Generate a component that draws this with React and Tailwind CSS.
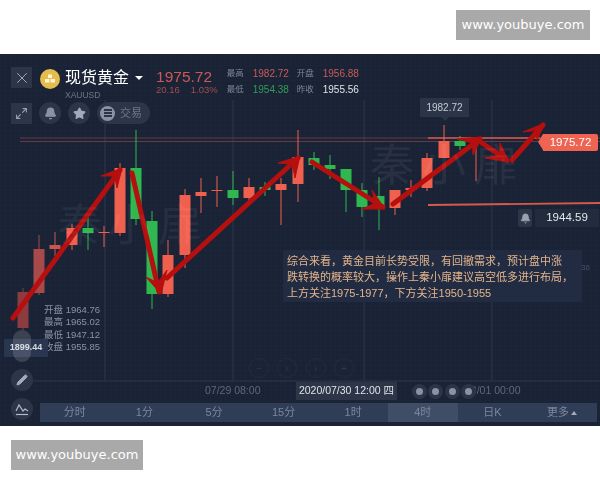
import React from 'react';
import { Bell, Star, X, Pencil, Maximize2 } from 'lucide-react';

const RED = '#f0604f';
const GREEN = '#2fb84f';

// x, bodyTop, bodyBottom, wickTop, wickBottom, colour
const candles = [
  [23, 292, 328, 288, 330, '#8c3c3e'],
  [39, 249, 293, 235, 295, '#a84a49'],
  [55, 245, 249, 232, 256, '#c9564c'],
  [72, 228, 245, 224, 250, RED],
  [88, 228, 233, 217, 250, GREEN],
  [104, 232, 233, 226, 247, RED],
  [120, 168, 233, 163, 236, RED],
  [136, 168, 219, 130, 225, GREEN],
  [152, 221, 294, 211, 309, GREEN],
  [168, 255, 294, 240, 297, RED],
  [185, 195, 255, 189, 268, RED],
  [201, 192, 196, 178, 213, RED],
  [217, 190, 191, 176, 207, RED],
  [233, 190, 198, 171, 205, GREEN],
  [249, 187, 198, 178, 205, RED],
  [265, 187, 190, 182, 196, GREEN],
  [281, 184, 190, 178, 225, RED],
  [298, 157, 184, 130, 202, RED],
  [314, 158, 165, 152, 170, GREEN],
  [330, 165, 169, 155, 179, GREEN],
  [346, 169, 190, 169, 212, GREEN],
  [362, 190, 207, 183, 217, GREEN],
  [379, 196, 208, 177, 230, GREEN],
  [395, 190, 208, 190, 215, RED],
  [411, 188, 190, 180, 197, RED],
  [427, 158, 188, 153, 191, RED],
  [444, 141, 158, 125, 158, RED],
  [460, 141, 146, 136, 150, GREEN],
  [476, 141, 143, 138, 181, RED],
];

// line from -> tip, then the two barbs of the hand-drawn arrow head
const arrows = [
  [13, 318, 120, 170, 101, 176, 117, 188],
  [132, 173, 159, 292, 146, 277, 167, 270],
  [167, 278, 298, 158, 278, 163, 295, 178],
  [312, 162, 383, 207, 362, 209, 372, 190],
  [393, 204, 480, 139, 457, 139, 473, 155],
  [482, 143, 507, 160, 485, 158, 500, 143],
  [512, 160, 543, 125, 523, 132, 537, 140],
];

const tabs = ['分时', '1分', '5分', '15分', '1时', '4时', '日K'];

function Chart() {
  return (
    <svg className="absolute inset-0" width="600" height="372" viewBox="0 54 600 372">
      <defs>
        <pattern id="grid" width="5" height="5" patternUnits="userSpaceOnUse">
          <path d="M5 0H0V5" fill="none" stroke="#ffffff" strokeOpacity="0.012" />
        </pattern>
      </defs>
      <rect x="0" y="54" width="600" height="372" fill="url(#grid)" />
      {[105, 233, 364, 492].map((x) => (
        <line key={x} x1={x} x2={x} y1="100" y2="381" stroke="#2c374d" />
      ))}
      <line x1="30" x2="600" y1="381" y2="381" stroke="#2c374d" />
      <line x1="20" x2="600" y1="138" y2="138" stroke="#7a3f48" strokeWidth="0.8" />
      <line x1="20" x2="600" y1="141.5" y2="141.5" stroke="#7a3f48" strokeWidth="0.8" />
      <line x1="428" x2="540" y1="138" y2="138" stroke="#d65a4c" strokeWidth="1.6" />
      <line x1="428" x2="600" y1="205" y2="203" stroke="#d65a4c" strokeWidth="1.8" />

      {candles.map(([x, top, bottom, wickTop, wickBottom, color]) => (
        <g key={x}>
          <line x1={x} x2={x} y1={wickTop} y2={wickBottom} stroke={color} strokeWidth="1" />
          <rect x={x - 5.5} y={top} width="11" height={bottom - top} fill={color} />
        </g>
      ))}

      {arrows.map(([x1, y1, x2, y2, ax, ay, bx, by]) => (
        <g key={x1}>
          <line x1={x1} y1={y1} x2={x2} y2={y2} stroke="#b50f0f" strokeWidth="5" strokeLinecap="round" />
          <polygon points={`${x2 + (x2 - x1 > 0 ? 2 : 0)},${y2 + (y2 > y1 ? 2 : -2)} ${ax},${ay} ${(ax + bx) / 2 * 0.5 + x2 * 0.5},${(ay + by) / 2 * 0.5 + y2 * 0.5} ${bx},${by}`} fill="#b50f0f" stroke="#b50f0f" strokeWidth="1" strokeLinejoin="round" />
        </g>
      ))}
    </svg>
  );
}

function Badge({ className }) {
  return (
    <div className={`h-[30px] bg-[#a9a9a9] flex items-center justify-center text-white text-[13px] [font-family:'DejaVu_Sans',sans-serif] ${className}`}>
      www.youbuye.com
    </div>
  );
}

function Stat({ label, value, color }) {
  return (
    <div className="h-[16px] flex items-center">
      <span className="w-[26px] text-[8.5px] text-[#7f8899]">{label}</span>
      <span className={`w-[44px] text-[10px] ${color}`}>{value}</span>
    </div>
  );
}

export default function App() {
  return (
    <div className="w-[600px] h-[480px] bg-white flex flex-col [font-family:'Liberation_Sans','Noto_Sans_CJK_SC',sans-serif]">
      <div className="h-[54px] pt-[10px] pr-[10px] flex justify-end">
        <Badge className="w-[134px]" />
      </div>

      <div className="relative h-[372px] bg-[#1a2336] overflow-hidden flex flex-col blur-[0.35px]">
        <Chart />

        {/* header */}
        <div className="relative flex items-start pt-[13px] pl-[11px] h-[48px]">
          <div className="w-[21px] h-[21px] bg-[#2c3648] flex items-center justify-center">
            <X size={18} strokeWidth={1.3} className="text-[#a3aab6]" />
          </div>
          <div className="ml-[8px] w-[20px] h-[20px] mt-[2px] rounded-full bg-[#e6bc4f] flex items-center justify-center">
            <svg width="12" height="10" viewBox="0 0 12 10" fill="#fff6d8">
              <rect x="4" y="0.5" width="4" height="3.5" />
              <rect x="1" y="5" width="4.4" height="3.5" />
              <rect x="6.6" y="5" width="4.4" height="3.5" />
            </svg>
          </div>
          <div className="ml-[5px] -mt-[1px]">
            <div className="flex items-center">
              <span className="text-white text-[16px] leading-[24px]">现货黄金</span>
              <span className="ml-[6px] w-0 h-0 border-x-[4px] border-x-transparent border-t-[4px] border-t-white" />
            </div>
            <div className="text-[#6d7688] text-[8.5px] leading-[10px]">XAUUSD</div>
          </div>
          <div className="ml-[13px] mt-[1px]">
            <div className="text-[#c95a58] text-[15.5px] leading-[18px]">1975.72</div>
            <div className="flex gap-[11px] text-[#a34c4d] text-[9.5px] leading-[11px] -mt-[2px]">
              <span>20.16</span>
              <span>1.03%</span>
            </div>
          </div>
          <div className="ml-[9px] -mt-[2px]">
            <Stat label="最高" value="1982.72" color="text-[#c95a58]" />
            <Stat label="最低" value="1954.38" color="text-[#2f9f55]" />
          </div>
          <div className="-mt-[2px]">
            <Stat label="开盘" value="1956.88" color="text-[#c95a58]" />
            <Stat label="昨收" value="1955.56" color="text-[#dfe3ea]" />
          </div>
        </div>

        {/* toolbar */}
        <div className="relative flex items-center pl-[11px] gap-[7px]">
          <div className="w-[21px] h-[21px] bg-[#2c3648] flex items-center justify-center">
            <Maximize2 size={13} className="text-[#9aa2b0]" />
          </div>
          <div className="w-[22px] h-[22px] rounded-full bg-[#2c3648] flex items-center justify-center">
            <Bell size={13} fill="#8b93a3" className="text-[#8b93a3]" />
          </div>
          <div className="w-[22px] h-[22px] rounded-full bg-[#2c3648] flex items-center justify-center">
            <Star size={13} fill="#a3abb9" className="text-[#a3abb9]" />
          </div>
          <div className="w-[53px] h-[22px] rounded-full bg-[#2c3648] flex items-center">
            <div className="w-[15px] h-[15px] ml-[3px] rounded-full bg-[#8b93a3] flex flex-col items-center justify-center gap-[1.5px]">
              <span className="w-[8px] h-[1.5px] bg-[#2c3648]" />
              <span className="w-[8px] h-[1.5px] bg-[#2c3648]" />
              <span className="w-[8px] h-[1.5px] bg-[#2c3648]" />
            </div>
            <span className="ml-[5px] text-[11px] text-[#6d7688]">交易</span>
          </div>
        </div>

        {/* watermarks */}
        <div className="absolute left-[58px] top-[150px] text-[44px] leading-none text-white/[0.05] tracking-[6px]">秦小扉</div>
        <div className="absolute left-[370px] top-[90px] text-[44px] leading-none text-white/[0.06] tracking-[8px]">秦小扉</div>

        {/* price tags */}
        <div className="absolute left-[420px] top-[44px] w-[49px] h-[19px] bg-[#2a3548] flex items-center justify-center text-[#c6cbd4] text-[10px]">
          1982.72
          <span className="absolute left-[21px] -bottom-[4px] w-0 h-0 border-x-[4px] border-x-transparent border-t-[4px] border-t-[#2a3548]" />
        </div>
        <div className="absolute left-[543px] top-[80px] w-[55px] h-[17px] bg-[#ee6352] rounded-r-[2px] flex items-center justify-center text-white text-[11.5px]">
          1975.72
          <span className="absolute -left-[5px] top-0 w-0 h-0 border-y-[8.5px] border-y-transparent border-r-[5px] border-r-[#ee6352]" />
        </div>
        <div className="absolute left-[518px] top-[155px] flex items-center gap-[3px]">
          <div className="w-[14px] h-[18px] bg-[#2c3648] rounded-[2px] flex items-center justify-center">
            <Bell size={11} fill="#9aa2b0" className="text-[#9aa2b0]" />
          </div>
          <div className="w-[64px] h-[18px] bg-[#222c3f] flex items-center justify-center text-[#e4e7ec] text-[11.5px]">1944.59</div>
        </div>

        {/* analysis note */}
        <div className="absolute left-[283px] top-[196px] w-[299px] h-[52px] bg-[#212c42] pl-[4px] pt-[3px] text-[#e3b48c] text-[11px] leading-[16px] whitespace-nowrap">
          <div>综合来看，黄金目前长势受限，有回撤需求，预计盘中涨</div>
          <div>跌转换的概率较大，操作上秦小扉建议高空低多进行布局，</div>
          <div>上方关注1975-1977，下方关注1950-1955</div>
        </div>
        <div className="absolute left-[581px] top-[208px] text-[8px] text-[#475065]">36</div>

        {/* hovered candle */}
        <div className="absolute left-[44px] top-[250px] text-[9.5px] leading-[12.4px] text-[#8b93a3]">
          <div>开盘 1964.76</div>
          <div>最高 1965.02</div>
          <div>最低 1947.12</div>
          <div>收盘 1955.85</div>
        </div>
        <div className="absolute left-[4px] top-[285px] w-[44px] h-[18px] bg-[#2a3650] flex items-center justify-center text-[#d5d9e0] text-[9px] font-bold">1899.44</div>
        <div className="absolute left-[13px] top-[276px] w-[18px] h-[32px] rounded-full bg-white/[0.14]" />

        {/* faint zoom controls */}
        <div className="absolute left-[249px] top-[304px] flex gap-[8.3px]">
          {['−', '‹', '›', '+'].map((c) => (
            <div key={c} className="w-[20px] h-[20px] rounded-full border border-white/[0.04] flex items-center justify-center text-[#2c3649] text-[11px]">{c}</div>
          ))}
        </div>

        <div className="relative mt-auto flex items-end pl-[11px]">
          {/* left tools */}
          <div className="absolute left-[11px] bottom-[6px] flex flex-col gap-[7px]">
            <div className="w-[22px] h-[22px] rounded-full bg-[#2c3648] flex items-center justify-center">
              <Pencil size={12} fill="#a3abb9" className="text-[#a3abb9]" />
            </div>
            <div className="w-[22px] h-[22px] rounded-full bg-[#2c3648] flex items-center justify-center">
              <svg width="14" height="13" viewBox="0 0 14 13" fill="none" stroke="#b4bbc7" strokeWidth="1.2">
                <path d="M1 8l3-6 4 6 2-2 3 2" />
                <path d="M1 11.5h12" />
              </svg>
            </div>
          </div>

          <div className="flex-1 pl-[29px] pr-[3px] pb-[4px]">
            {/* time axis */}
            <div className="relative h-[20px] mb-[2px] flex items-center text-[10.5px] text-[#5f6879]">
              <span className="absolute left-[165px]">07/29 08:00</span>
              <span className="absolute left-[256px] w-[101px] h-[18px] bg-[#2c3648] flex items-center justify-center text-[#dfe3ea]">2020/07/30 12:00 四</span>
              <span className="absolute left-[425px]">08/01 00:00</span>
              <div className="absolute left-[371.5px] flex gap-[1.5px]">
                {[0, 1, 2, 3].map((i) => (
                  <span key={i} className="w-[7px] h-[7px] rounded-full bg-[#8b93a3] border-4 border-[#2b3548] box-content" />
                ))}
              </div>
            </div>
            {/* period tabs */}
            <div className="h-[19px] bg-[#2f3d57] flex items-center text-[11px] text-[#7c879b]">
              {tabs.map((t) => (
                <div key={t} className={`w-[69.6px] h-full flex items-center justify-center ${t === '4时' ? 'bg-[#3f4d66]' : ''}`}>{t}</div>
              ))}
              <div className="flex-1 flex items-center justify-center gap-[2px]">
                更多
                <span className="w-0 h-0 border-x-[3px] border-x-transparent border-b-[4px] border-b-[#a3abb9]" />
              </div>
            </div>
          </div>
        </div>
      </div>

      <div className="pt-[14px] pl-[11px]">
        <Badge className="w-[132px]" />
      </div>
    </div>
  );
}
